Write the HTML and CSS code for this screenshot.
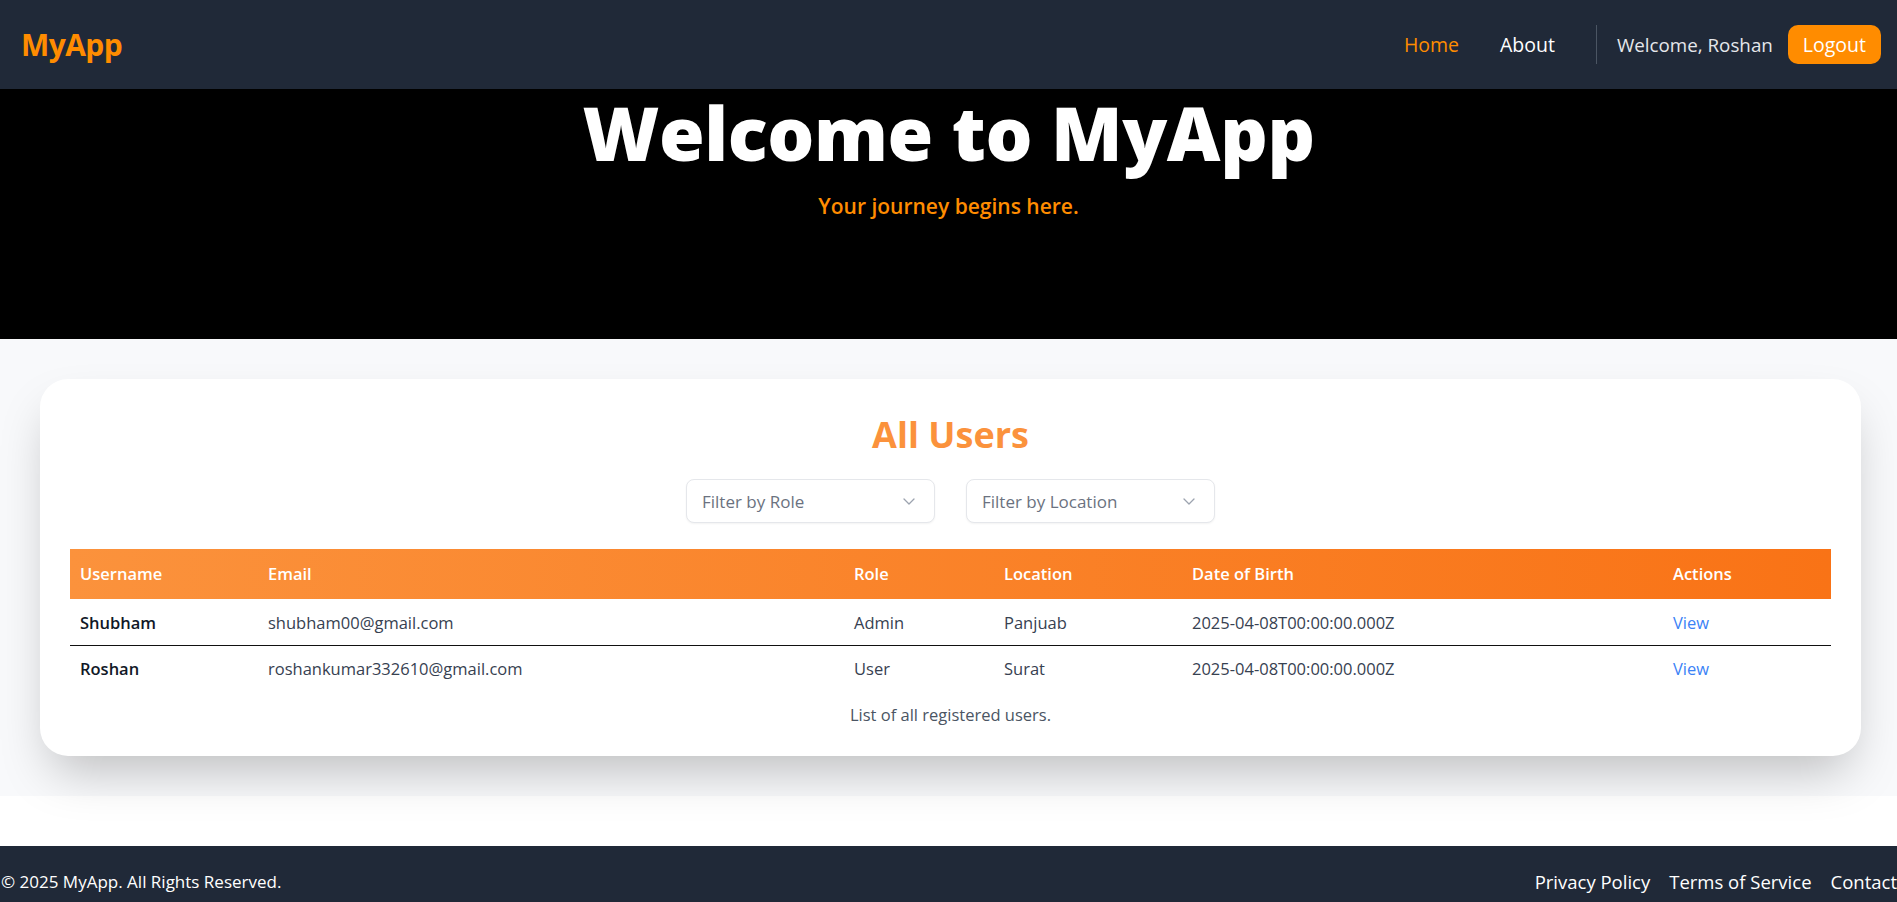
FILE: index.html
```html
<!DOCTYPE html>
<html lang="en">
<head>
<meta charset="utf-8">
<title>MyApp</title>
<link rel="stylesheet" href="styles.css">
</head>
<body>
<nav class="navbar">
  <div class="brand">MyApp</div>
  <div class="nav-right">
    <a class="nav-link active" href="#">Home</a>
    <a class="nav-link" href="#">About</a>
    <span class="divider"></span>
    <span class="welcome">Welcome, Roshan</span>
    <button class="logout">Logout</button>
  </div>
</nav>

<header class="hero">
  <h1 class="hero-title">Welcome to MyApp</h1>
  <p class="hero-sub">Your journey begins here.</p>
</header>

<main class="users-section">
  <div class="card">
    <h2 class="card-title">All Users</h2>
    <div class="filters">
      <div class="select">
        <span>Filter by Role</span>
        <svg class="chev" width="12" height="7" viewBox="0 0 12 7"><path d="M1 1l5 5 5-5" fill="none" stroke="#9ca3af" stroke-width="1.3" stroke-linecap="round" stroke-linejoin="round"/></svg>
      </div>
      <div class="select">
        <span>Filter by Location</span>
        <svg class="chev" width="12" height="7" viewBox="0 0 12 7"><path d="M1 1l5 5 5-5" fill="none" stroke="#9ca3af" stroke-width="1.3" stroke-linecap="round" stroke-linejoin="round"/></svg>
      </div>
    </div>
    <table class="users-table">
      <colgroup>
        <col class="c-user"><col class="c-email"><col class="c-role"><col class="c-loc"><col class="c-dob"><col class="c-act">
      </colgroup>
      <thead>
        <tr>
          <th>Username</th><th>Email</th><th>Role</th><th>Location</th><th>Date of Birth</th><th>Actions</th>
        </tr>
      </thead>
      <tbody>
        <tr class="row-sep">
          <td class="uname">Shubham</td>
          <td>shubham00@gmail.com</td>
          <td>Admin</td>
          <td>Panjuab</td>
          <td>2025-04-08T00:00:00.000Z</td>
          <td><a class="view" href="#">View</a></td>
        </tr>
        <tr>
          <td class="uname">Roshan</td>
          <td>roshankumar332610@gmail.com</td>
          <td>User</td>
          <td>Surat</td>
          <td>2025-04-08T00:00:00.000Z</td>
          <td><a class="view" href="#">View</a></td>
        </tr>
      </tbody>
      <caption>List of all registered users.</caption>
    </table>
  </div>
</main>

<footer class="footer">
  <span class="copy">© 2025 MyApp. All Rights Reserved.</span>
  <div class="footer-links">
    <a href="#">Privacy Policy</a>
    <a href="#">Terms of Service</a>
    <a href="#">Contact</a>
  </div>
</footer>
</body>
</html>
```
FILE: styles.css
```css
* { box-sizing: border-box; }

body {
  margin: 0;
  font-family: "Open Sans", "Noto Sans", sans-serif;
  background: #ffffff;
  overflow-x: hidden;
}

a { text-decoration: none; }

/* Navbar */
.navbar {
  height: 89px;
  background: #202938;
  display: flex;
  align-items: center;
  justify-content: space-between;
  padding: 0 16px 0 21px;
}
.brand {
  color: #ff8c00;
  font-size: 30px;
  font-weight: 700;
  letter-spacing: -0.6px;
}
.nav-right {
  display: flex;
  align-items: center;
}
.nav-link {
  color: #ffffff;
  font-size: 19.5px;
  margin-right: 41px;
}
.nav-link.active { color: #ff8c00; }
.divider {
  width: 1px;
  height: 39px;
  background: #4b5563;
  margin-right: 20px;
}
.welcome {
  color: #e5e7eb;
  font-size: 18.8px;
  margin-right: 15px;
}
.logout {
  background: #ff8c00;
  color: #ffffff;
  border: none;
  border-radius: 10px;
  font-family: inherit;
  font-size: 19.5px;
  line-height: 27px;
  padding: 6px 15px;
}

/* Hero */
.hero {
  background: #000000;
  height: 250px;
  padding-top: 7px;
  text-align: center;
}
.hero-title {
  margin: 0;
  color: #ffffff;
  font-size: 74px;
  line-height: 74px;
  font-weight: 800;
  letter-spacing: -0.4px;
}
.hero-sub {
  margin: 21px 0 0;
  color: #ff8c00;
  font-size: 21px;
  line-height: 30px;
  font-weight: 600;
}

/* Users section */
.users-section {
  background: #f8f9fb;
  padding: 40px 36px 40px 40px;
  margin-bottom: 50px;
}
.card {
  background: #ffffff;
  border-radius: 28px;
  padding: 30px 30px 29px;
  box-shadow: 0 25px 50px -12px rgba(0, 0, 0, 0.25);
}
.card-title {
  margin: 0;
  text-align: center;
  color: #fb923c;
  font-size: 36px;
  line-height: 52px;
  font-weight: 700;
}
.filters {
  display: flex;
  justify-content: center;
  gap: 31px;
  margin-top: 18px;
}
.select {
  width: 249px;
  height: 44px;
  border: 1px solid #e5e7eb;
  border-radius: 8px;
  background: #ffffff;
  box-shadow: 0 1px 2px rgba(0, 0, 0, 0.05);
  display: flex;
  align-items: center;
  justify-content: space-between;
  padding: 0 19px 0 15px;
  color: #6b7280;
  font-size: 17px;
}
.chev { display: block; }

/* Table */
.users-table {
  width: 100%;
  margin-top: 26px;
  border-collapse: collapse;
  table-layout: fixed;
  font-size: 16.5px;
}
.c-user { width: 188px; }
.c-email { width: 586px; }
.c-role { width: 150px; }
.c-loc { width: 188px; }
.c-dob { width: 481px; }
.c-act { width: 168px; }

.users-table thead tr {
  background: linear-gradient(to right, #fb923c, #f97316);
}
.users-table th {
  color: #ffffff;
  font-weight: 600;
  text-align: left;
  padding: 13px 10px;
  line-height: 24px;
}
.users-table td {
  color: #374151;
  padding: 11px 10px;
  line-height: 24px;
}
.users-table .row-sep td {
  padding-top: 12px;
  padding-bottom: 10px;
  border-bottom: 1px solid #111111;
}
.users-table td.uname {
  color: #111827;
  font-weight: 600;
}
.view { color: #3b82f6; }
.users-table caption {
  caption-side: bottom;
  padding-top: 11px;
  color: #4b5563;
  font-size: 16.5px;
  line-height: 24px;
}

/* Footer */
.footer {
  background: #202938;
  display: flex;
  justify-content: space-between;
  align-items: center;
  padding: 22px 0 22px 1px;
  font-size: 18.5px;
  line-height: 28px;
}
.copy { color: #ffffff; font-size: 17px; }
.footer-links {
  display: flex;
  gap: 19px;
}
.footer-links a { color: #ffffff; }
```
